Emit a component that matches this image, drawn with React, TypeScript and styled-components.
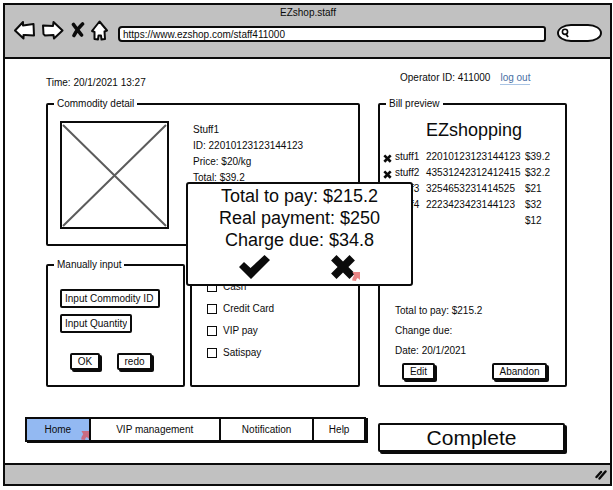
import React from "react";
import styled, { createGlobalStyle } from "styled-components";

const INK = "#0b0b0b";
const CHROME = "#c1c1c1";

const GlobalStyle = createGlobalStyle`
  *, *::before, *::after { box-sizing: border-box; }
  body {
    margin: 0;
    background: #fff;
    color: ${INK};
    font: 10px/12px "Liberation Sans", Arial, sans-serif;
  }
  button, input { font: inherit; color: inherit; }
`;

const BrowserWindow = styled.div`
  display: flex;
  flex-direction: column;
  margin: 3px 1px 3px 3px;
  border: 2px solid ${INK};
`;

const Chrome = styled.header`
  padding: 2px 8px 15px 9px;
  background: ${CHROME};
  border-bottom: 2px solid ${INK};
`;

const PageTitle = styled.div`
  text-align: center;
`;

const Toolbar = styled.div`
  display: flex;
  align-items: flex-end;
  margin-top: 1px;
`;

const NavIcons = styled.div`
  display: flex;
  gap: 6px;
  margin-right: 10px;
`;

const IconButton = styled.button`
  display: flex;
  padding: 0;
  border: 0;
  background: none;
  cursor: pointer;
`;

const AddressInput = styled.input`
  flex: 1;
  min-width: 0;
  height: 16px;
  padding: 0 3px;
  border: 2px solid ${INK};
  border-radius: 4px 3px 3px 4px;
  background: #fff;
`;

const SearchBox = styled.label`
  display: flex;
  align-items: center;
  width: 45px;
  height: 18px;
  margin-left: 11px;
  padding: 0 2px;
  border: 2px solid ${INK};
  border-radius: 14px / 9px;
  background: #fff;
`;

const SearchInput = styled.input`
  flex: 1;
  min-width: 0;
  height: 12px;
  padding: 0;
  border: 0;
  outline: 0;
  background: none;
`;

const Content = styled.main`
  position: relative;
  padding: 13px 43px 11px 20px;
`;

const StatusRow = styled.div`
  display: grid;
  grid-template-columns: 314fr 189fr;
  column-gap: 18px;
  height: 17px;
  margin: 0 0 9px 21px;
`;

const Clock = styled.div`
  align-self: end;
`;

const Operator = styled.div`
  display: flex;
  align-items: flex-start;
  gap: 10px;
  padding-left: 22px;
  white-space: nowrap;
`;

const LogOut = styled.a`
  color: #4a6fa5;
  text-decoration: none;
  border-bottom: 1px solid #a9c4e4;
`;

const Panels = styled.div`
  display: grid;
  grid-template-columns: 314fr 189fr;
  column-gap: 18px;
  margin-left: 21px;
`;

const LeftPanels = styled.div`
  display: grid;
  grid-template-columns: 139fr 170fr;
  gap: 13px 5px;
`;

const Panel = styled.fieldset<{ $wide?: boolean; $pad: string; $plain?: boolean }>`
  grid-column: ${(p) => (p.$wide ? "1 / -1" : "auto")};
  display: flex;
  flex-direction: column;
  min-width: 0;
  margin: ${(p) => (p.$plain ? "6px 0 0" : "0")};
  padding: ${(p) => p.$pad};
  border: 2px solid ${INK};
  border-radius: 2px;
`;

const Legend = styled.legend`
  padding: 0 3px;
`;

const CommodityLegend = styled(Legend)`
  margin-left: -6px;
`;

const BillLegend = styled(Legend)`
  margin-left: 3px;
`;

const Commodity = styled.div`
  display: flex;
  gap: 24px;
`;

const Picture = styled.svg`
  display: block;
  width: 109px;
  height: 108px;
`;

const Lines = styled.div<{ $step: number }>`
  padding-top: 1px;
  line-height: ${(p) => p.$step}px;
`;

const Stack = styled.div`
  display: flex;
  flex-direction: column;
  align-items: flex-start;
  gap: 6px;
`;

const Field = styled.input<{ $width: number }>`
  width: ${(p) => p.$width}px;
  height: 19px;
  padding: 0 3px;
  border: 2px solid ${INK};
  border-radius: 2px;
  background: #fff;
  &::placeholder { color: ${INK}; opacity: 1; }
`;

const PushButton = styled.button<{ $width: number }>`
  width: ${(p) => p.$width}px;
  height: 17px;
  padding: 0;
  border: 2px solid ${INK};
  border-radius: 2px;
  background: #fff;
  box-shadow: 2px 2px 0 ${INK};
  line-height: 12px;
  cursor: pointer;
`;

const ManualActions = styled.div`
  display: flex;
  gap: 17px;
  margin: 20px 0 2px 10px;
`;

const PayOption = styled.label`
  display: flex;
  align-items: center;
  gap: 6px;
  height: 22px;
`;

const CheckBox = styled.input`
  appearance: none;
  width: 10px;
  height: 10px;
  margin: 0;
  border: 1px solid ${INK};
  background: #fff;
  &:checked { background: ${INK}; }
`;

const ShopName = styled.h1`
  margin: 0 0 7px;
  font-size: 18px;
  font-weight: 400;
  line-height: 24px;
  text-align: center;
`;

const Bill = styled.table`
  width: 100%;
  border-collapse: collapse;
  table-layout: fixed;
  td {
    height: 16px;
    padding: 0;
    white-space: nowrap;
  }
`;

const Col = styled.col<{ $width?: number }>`
  width: ${(p) => (p.$width ? `${p.$width}px` : "auto")};
`;

const RemoveButton = styled(IconButton)`
  padding-top: 3px;
`;

const Totals = styled(Lines)`
  margin-top: 71px;
  padding-left: 12px;
`;

const BillActions = styled.div`
  display: flex;
  justify-content: space-between;
  margin: 2px 18px 2px 19px;
`;

const BottomRow = styled.div`
  display: grid;
  grid-template-columns: 341fr 187fr;
  column-gap: 12px;
  align-items: start;
  margin: 30px 2px 0 0;
`;

const Tabs = styled.nav`
  display: grid;
  grid-template-columns: 62fr 131fr 94fr 52fr;
  height: 25px;
  border: 2px solid ${INK};
  box-shadow: 2px 1px 0 ${INK};
`;

const Tab = styled.a<{ $active?: boolean }>`
  position: relative;
  display: flex;
  align-items: center;
  justify-content: center;
  color: inherit;
  text-decoration: none;
  background: ${(p) => (p.$active ? "#93b9f2" : "#fff")};
  & + & { border-left: 2px solid ${INK}; }
`;

const CompleteButton = styled.button`
  height: 29px;
  margin-top: 6px;
  padding: 0;
  border: 2px solid ${INK};
  border-radius: 2px;
  background: #fff;
  box-shadow: 2px 2px 0 ${INK};
  font-size: 21px;
  line-height: 24px;
  cursor: pointer;
`;

const StatusBar = styled.footer`
  display: flex;
  align-items: center;
  justify-content: flex-end;
  height: 21px;
  padding-right: 3px;
  background: ${CHROME};
  border-top: 2px solid ${INK};
`;

const PayDialog = styled.dialog`
  position: absolute;
  top: 123px;
  right: auto;
  left: 181px;
  width: 227px;
  margin: 0;
  padding: 1px 0 4px;
  border: 2px solid ${INK};
  border-radius: 3px;
  background: #fff;
  color: inherit;
  font-size: 18px;
  line-height: 22px;
  text-align: center;
`;

const DialogActions = styled.div`
  display: flex;
  justify-content: center;
  gap: 60px;
  margin: 3px 4px 0 0;
`;

const DialogButton = styled(IconButton)`
  position: relative;
`;

const Marker = styled.svg<{ $right: number; $bottom: number }>`
  position: absolute;
  right: ${(p) => p.$right}px;
  bottom: ${(p) => p.$bottom}px;
  width: 8px;
  height: 9px;
`;

const LinkMarker = ({ right = 0, bottom = 0, color = "#c96b80" }) => (
  <Marker $right={right} $bottom={bottom} viewBox="0 0 8 9" aria-hidden="true">
    <path d="M.5 0H8V8L5.8 6Q4.2 6.6 4 9L.2 8.6Q.4 5.2 2.2 3.2Z" fill={color} />
  </Marker>
);

const Cross = ({ size }: { size: number }) => (
  <svg width={size} height={size} viewBox="0 0 24 24" aria-hidden="true">
    <path d="M6 1L12 7 18 1 23 6 17 12 23 18 18 23 12 17 6 23 1 18 7 12 1 6Z" fill={INK} />
  </svg>
);

const outline = { fill: "#fff", stroke: INK, strokeWidth: 2, strokeLinejoin: "round" as const };

const items = [
  { name: "stuff1", id: "22010123123144123", price: "$39.2" },
  { name: "stuff2", id: "43531242312412415", price: "$32.2" },
  { name: "stuff3", id: "3254653231414525", price: "$21" },
  { name: "stuff4", id: "2223423423144123", price: "$32" },
  { name: "", id: "", price: "$12" },
];

const payOptions = ["Cash", "Credit Card", "VIP pay", "Satispay"];

export default function App() {
  return (
    <>
      <GlobalStyle />
      <BrowserWindow>
        <Chrome>
          <PageTitle>EZshop.staff</PageTitle>
          <Toolbar>
            <NavIcons>
              <IconButton aria-label="Back">
                <svg width="22" height="22" viewBox="0 0 22 22">
                  <path d="M1 10.5L9 2V5.5L19.5 4 20 15.5 9.5 15V18.5Z" {...outline} />
                </svg>
              </IconButton>
              <IconButton aria-label="Forward">
                <svg width="22" height="22" viewBox="0 0 22 22">
                  <path d="M1 5.5L11 6 11.5 2 20.5 10.5 12 18.5 11.5 15 3 15.5 1.5 14Z" {...outline} />
                </svg>
              </IconButton>
              <IconButton aria-label="Stop">
                <svg width="15" height="22" viewBox="0 0 15 22">
                  <path d="M3.5 4.5Q6 8 11.5 15M12.5 4Q8 8 4 15.5" fill="none" stroke={INK} strokeWidth="3.6" strokeLinecap="round" />
                </svg>
              </IconButton>
              <IconButton aria-label="Home">
                <svg width="17" height="22" viewBox="0 0 17 22">
                  <path d="M8.5 1.5L16 10.5 13.5 11.5 14 19 10.5 19.5 10 15.5H7.5L7 19.5 3.5 19V12L1 11Z" {...outline} />
                </svg>
              </IconButton>
            </NavIcons>
            <AddressInput aria-label="Address" defaultValue="https://www.ezshop.com/staff411000" />
            <SearchBox>
              <svg width="8" height="10" viewBox="0 0 8 10" aria-hidden="true">
                <circle cx="4" cy="3.8" r="2.6" fill="none" stroke={INK} strokeWidth="1.6" />
                <path d="M5 6L7 9" stroke={INK} strokeWidth="1.8" />
              </svg>
              <SearchInput aria-label="Search" />
            </SearchBox>
          </Toolbar>
        </Chrome>

        <Content>
          <StatusRow>
            <Clock>Time: 20/1/2021 13:27</Clock>
            <Operator>
              <span>Operator ID: 411000</span>
              <LogOut href="#logout">log out</LogOut>
            </Operator>
          </StatusRow>

          <Panels>
            <LeftPanels>
              <Panel $wide $pad="11px 12px 15px">
                <CommodityLegend>Commodity detail</CommodityLegend>
                <Commodity>
                  <Picture viewBox="0 0 109 108" role="img" aria-label="Commodity picture">
                    <rect x="1" y="1" width="107" height="106" fill="#fff" stroke={INK} strokeWidth="2" />
                    <path d="M3 4L106 105M106 4L3 105" stroke="#5c5c5c" strokeWidth="2" />
                  </Picture>
                  <Lines $step={16}>
                    <div>Stuff1</div>
                    <div>ID: 22010123123144123</div>
                    <div>Price: $20/kg</div>
                    <div>Total: $39.2</div>
                  </Lines>
                </Commodity>
              </Panel>

              <Panel $pad="18px 12px 13px">
                <CommodityLegend>Manually input</CommodityLegend>
                <Stack>
                  <Field $width={100} aria-label="Commodity ID" placeholder="Input Commodity ID" />
                  <Field $width={72} aria-label="Quantity" placeholder="Input Quantity" />
                </Stack>
                <ManualActions>
                  <PushButton $width={30}>OK</PushButton>
                  <PushButton $width={35}>redo</PushButton>
                </ManualActions>
              </Panel>

              <Panel $plain $pad="9px 15px" aria-label="Payment method">
                {payOptions.map((option) => (
                  <PayOption key={option}>
                    <CheckBox type="checkbox" />
                    {option}
                  </PayOption>
                ))}
              </Panel>
            </LeftPanels>

            <Panel $pad="8px 0 3px 3px">
              <BillLegend>Bill preview</BillLegend>
              <ShopName>EZshopping</ShopName>
              <Bill>
                <colgroup>
                  <Col $width={12} />
                  <Col $width={31} />
                  <Col $width={99} />
                  <Col />
                </colgroup>
                <tbody>
                  {items.map((item) => (
                    <tr key={item.price}>
                      <td>
                        {item.name && (
                          <RemoveButton aria-label={`Remove ${item.name}`}>
                            <Cross size={9} />
                          </RemoveButton>
                        )}
                      </td>
                      <td>{item.name}</td>
                      <td>{item.id}</td>
                      <td>{item.price}</td>
                    </tr>
                  ))}
                </tbody>
              </Bill>
              <Totals $step={20}>
                <div>Total to pay: $215.2</div>
                <div>Change due:</div>
                <div>Date: 20/1/2021</div>
              </Totals>
              <BillActions>
                <PushButton $width={33}>Edit</PushButton>
                <PushButton $width={55}>Abandon</PushButton>
              </BillActions>
            </Panel>
          </Panels>

          <BottomRow>
            <Tabs>
              <Tab $active href="#home">
                Home
                <LinkMarker />
              </Tab>
              <Tab href="#vip">VIP management</Tab>
              <Tab href="#notification">Notification</Tab>
              <Tab href="#help">Help</Tab>
            </Tabs>
            <CompleteButton>Complete</CompleteButton>
          </BottomRow>

          <PayDialog open aria-label="Payment">
            <div>Total to pay: $215.2</div>
            <div>Real payment: $250</div>
            <div>Charge due: $34.8</div>
            <DialogActions>
              <DialogButton aria-label="Confirm">
                <svg width="31" height="26" viewBox="0 0 31 26">
                  <path d="M0 13L5 8 11.5 14 25.5 1 31 6 12 25Z" fill={INK} />
                </svg>
              </DialogButton>
              <DialogButton aria-label="Cancel">
                <Cross size={26} />
                <LinkMarker right={-4} bottom={-1} color="#e98585" />
              </DialogButton>
            </DialogActions>
          </PayDialog>
        </Content>

        <StatusBar>
          <svg width="12" height="10" viewBox="0 0 12 10" aria-hidden="true">
            <path d="M1.5 7L6 2M4.5 8.5L10.5 1.5" stroke={INK} strokeWidth="2.4" strokeLinecap="round" />
          </svg>
        </StatusBar>
      </BrowserWindow>
    </>
  );
}
